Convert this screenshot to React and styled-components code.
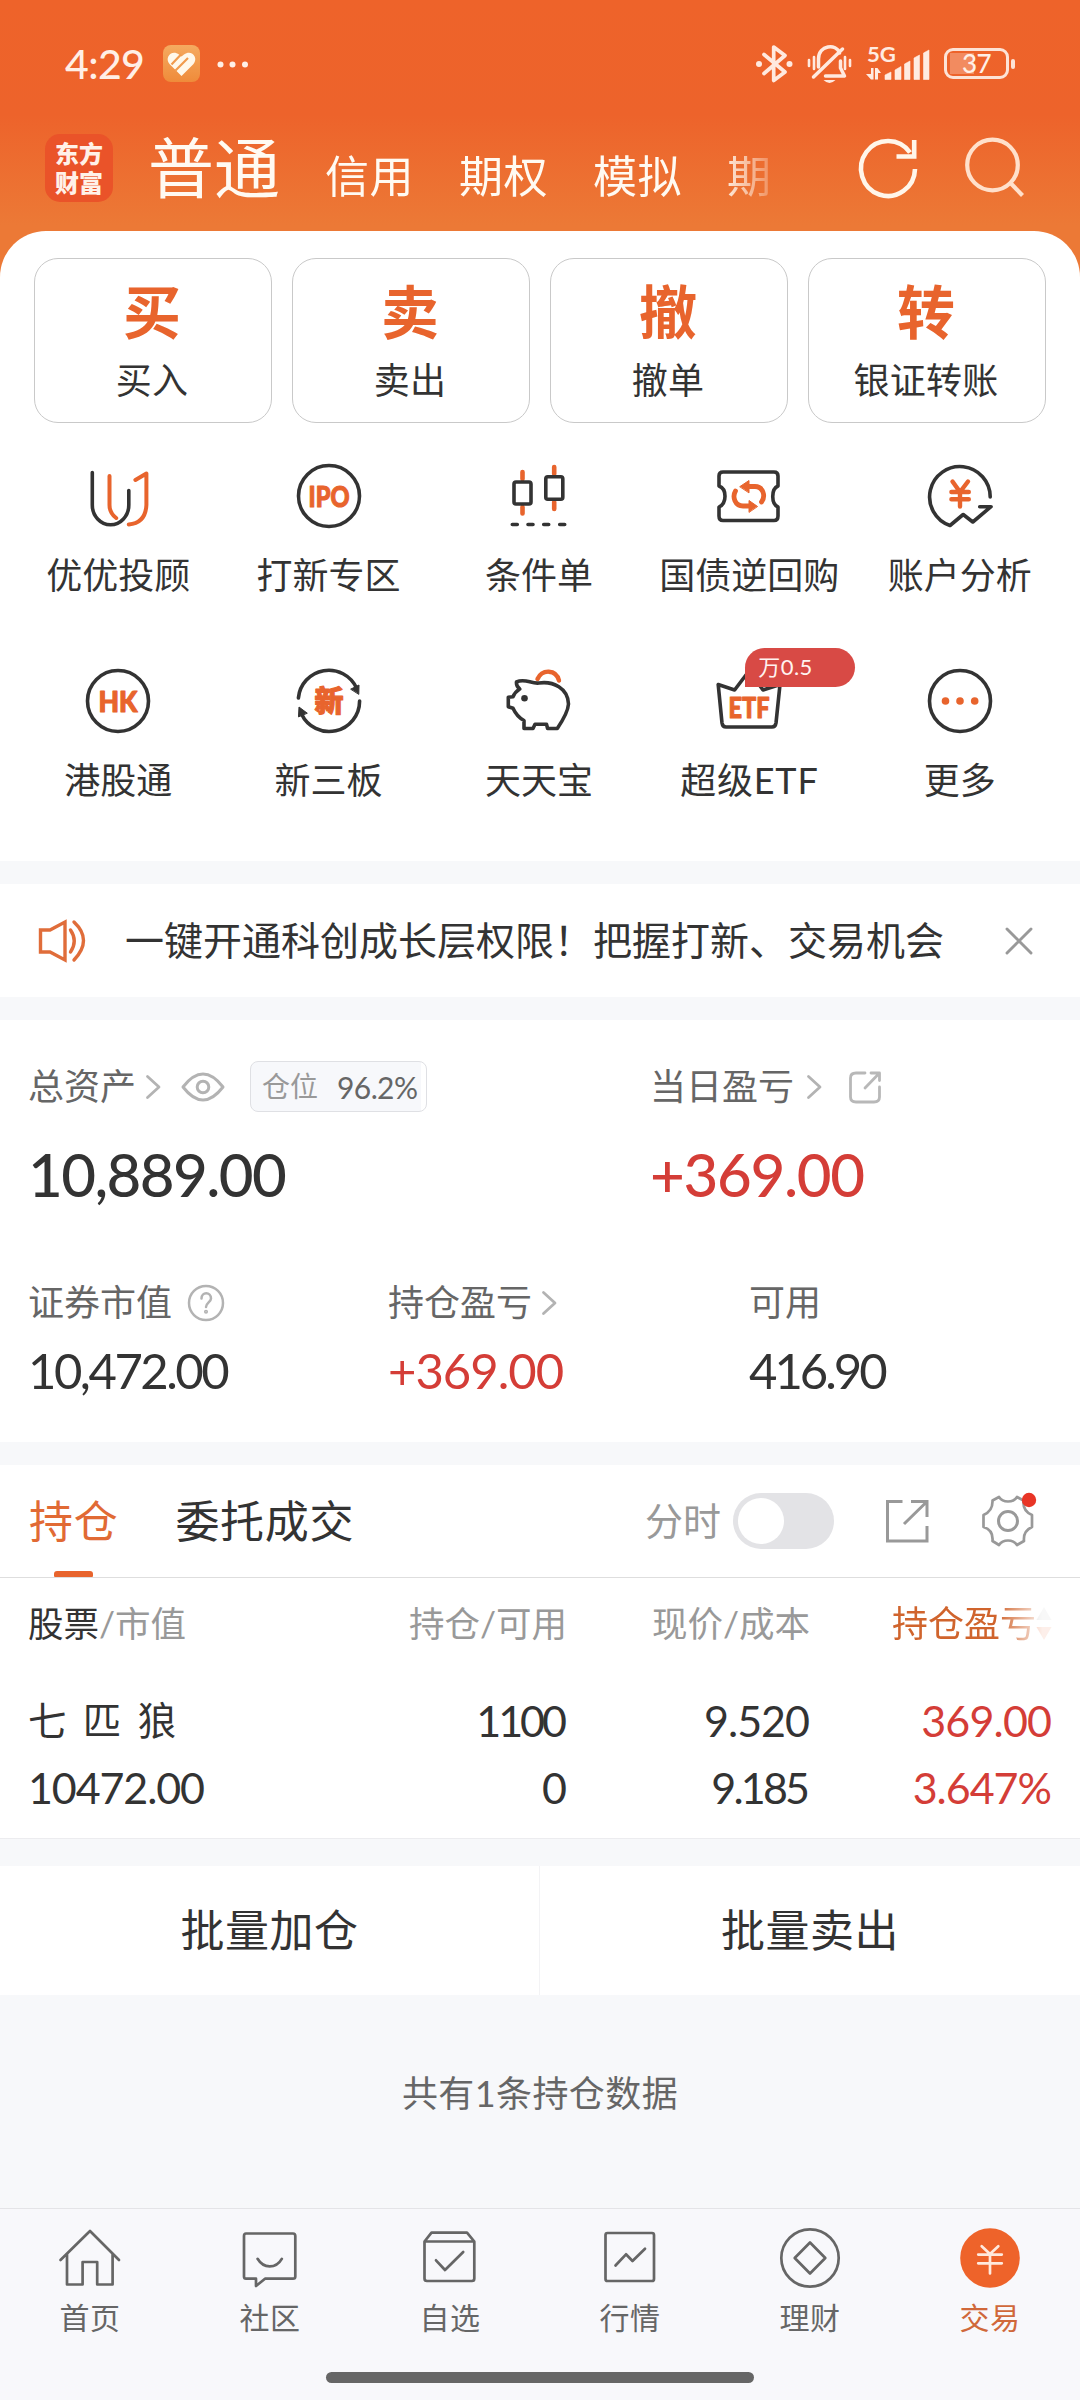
import React from "react";
import styled, { createGlobalStyle, css } from "styled-components";

const ORANGE = "#e8642d";
const INK = "#333333";
const RED = "#d43d37";
const BAND = "#f7f8fa";

const GlobalStyle = createGlobalStyle`
  *, *::before, *::after { box-sizing: border-box; }
  body {
    margin: 0;
    background: ${BAND};
    color: ${INK};
    font-family: Lato, "Noto Sans CJK SC", sans-serif;
  }
  svg { display: block; flex: none; overflow: visible; }
`;

const Screen = styled.div`
  width: 1080px;
  height: 2400px;
  display: flex;
  flex-direction: column;
  overflow: hidden;
  background: ${BAND};
`;

const Top = styled.div`
  background: linear-gradient(#ee632a 0, #ed632b 115px, #ec7936 225px);
`;

const Row = styled.div`
  display: flex;
  align-items: center;
  margin-left: ${(p) => (p.$push ? "auto" : `${p.$left || 0}px`)};
  gap: ${(p) => p.$gap || 0}px;
`;

const Text = styled.span`
  display: block;
  white-space: pre;
  line-height: 1.2;
  font-size: ${(p) => p.$size || 36}px;
  color: ${(p) => p.$color || "inherit"};
  font-weight: ${(p) => p.$weight || 400};
  letter-spacing: ${(p) => p.$track || 0}px;
  word-spacing: ${(p) => p.$word || 0}px;
`;

/* Numbers set tight; the last glyph's tracking is handed back so right edges align. */
const Num = styled(Text)`
  margin-right: ${(p) => -(p.$track || 0)}px;
`;

/* Status bar */
const StatusBar = styled(Row)`
  height: 127px;
  padding: 0 71px 0 65px;
  justify-content: space-between;
  color: #ffefe6;
`;
const Battery = styled.div`
  position: relative;
  width: 65px;
  height: 31px;
  border: 3px solid #fde3d6;
  border-radius: 9px;
  display: flex;
  align-items: center;
  justify-content: center;
  background: linear-gradient(90deg, #f28b60 24px, transparent 24px) no-repeat 3px 2px / 56px 21px;
  &::after {
    content: "";
    position: absolute;
    right: -9px;
    top: 8px;
    width: 4px;
    height: 10px;
    border-radius: 2px;
    background: #fde3d6;
  }
`;

/* Account navigation */
const AccountBar = styled(Row)`
  height: 104px;
  padding: 0 55px 23px 45px;
`;
const Logo = styled.div`
  width: 68px;
  height: 68px;
  margin-right: 35px;
  border-radius: 15px;
  background: #ea5329;
  color: #fff1e8;
  display: flex;
  flex-direction: column;
  align-items: center;
  justify-content: center;
  font-weight: 900;
  font-size: 24px;
  line-height: 29px;
`;
const AccountTabs = styled.div`
  display: flex;
  align-items: baseline;
  width: 645px;
  height: 80px;
  gap: 45px;
  color: #fffaf2;
  mask-image: linear-gradient(90deg, #000 570px, rgba(0, 0, 0, 0.25) 622px, transparent 626px);
`;

/* Main sheet */
const Sheet = styled.div`
  background: #fff;
  border-radius: 46px 46px 0 0;
  height: 630px;
  padding-top: 27px;
`;
const QuickRow = styled.div`
  display: grid;
  grid-template-columns: repeat(4, 238px);
  gap: 20px;
  padding: 0 34px;
`;
const QuickCard = styled.div`
  height: 165px;
  border: 1px solid #c9c9c9;
  border-radius: 24px;
  display: flex;
  flex-direction: column;
  align-items: center;
  gap: 12px;
  padding: 18px 2px 0 0;
`;
const ShortcutGrid = styled.div`
  display: grid;
  grid-template-columns: repeat(5, 210.4px);
  grid-auto-rows: 205px;
  padding: 40px 13px 0;
`;
const Shortcut = styled.div`
  position: relative;
  display: flex;
  flex-direction: column;
  align-items: center;
  gap: 25px;
`;
const Badge = styled.div`
  position: absolute;
  left: 101px;
  top: -20px;
  width: 110px;
  height: 39px;
  padding-left: 13px;
  display: flex;
  align-items: center;
  border-radius: 20px 20px 20px 0;
  background: #d84a45;
  color: #fff3f0;
`;

/* Sections */
const Gap = styled.div`
  height: ${(p) => p.$h}px;
  background: ${BAND};
`;
const Notice = styled(Row)`
  height: 113px;
  background: #fff;
  padding: 0 47px 0 37px;
`;
const Assets = styled.div`
  height: 422px;
  background: #fff;
  padding-top: 41px;
`;
const AssetLine = styled.div`
  display: grid;
  grid-template-columns: ${(p) => p.$cols};
  grid-template-rows: 100%;
  align-items: center;
  padding-left: 28px;
  margin-top: ${(p) => p.$mt || 0}px;
  height: ${(p) => p.$h}px;
`;
const Ratio = styled(Row)`
  width: 177px;
  height: 51px;
  margin-left: 25px;
  padding-left: 11px;
  gap: 19px;
  border: 1px solid #dfe0e4;
  border-radius: 8px;
  background: linear-gradient(90deg, #f7f8fb 170px, #fff 170px);
`;
const TabBar = styled(Row)`
  height: 113px;
  background: #fff;
  border-bottom: 1px solid #dedede;
  padding: 0 45px 0 29px;
`;
const HoldingTab = styled.div`
  height: 112px;
  margin-right: 57px;
  display: flex;
  align-items: center;
  position: relative;
  ${(p) =>
    p.$active &&
    css`
      color: #e16a34;
      &::after {
        content: "";
        position: absolute;
        left: 25px;
        bottom: 0;
        width: 39px;
        height: 6px;
        border-radius: 3px 3px 1px 1px;
        background: ${ORANGE};
      }
    `}
`;
const Toggle = styled.div`
  width: 101px;
  height: 56px;
  border-radius: 28px;
  background: #e3e3e6;
  padding: 5px;
  margin: 0 51px 0 12px;
  &::before {
    content: "";
    display: block;
    width: 46px;
    height: 46px;
    border-radius: 50%;
    background: #fff;
  }
`;
const Table = styled.div`
  height: 261px;
  background: #fff;
  border-bottom: 1px solid #ececef;
  padding: 11px 28px 0;
`;
const TableRow = styled.div`
  display: grid;
  grid-template-columns: 300px 239px 243px 1fr;
  grid-template-rows: 100%;
  align-items: center;
  margin-top: ${(p) => p.$mt || 0}px;
  height: ${(p) => p.$h}px;
  & > :not(:first-child) { justify-self: end; }
`;
const SortHead = styled(Row)`
  width: 160px;
  mask-image: linear-gradient(90deg, #000 105px, rgba(0, 0, 0, 0.1) 150px);
`;
const Actions = styled.div`
  display: grid;
  grid-template-columns: 539px 1px 540px;
  height: 129px;
  background: #fff;
`;
const Action = styled.div`
  display: flex;
  align-items: center;
  justify-content: center;
`;
const Divider = styled.div`
  background: #f3f3f5;
`;
const Footnote = styled.div`
  flex: 1;
  display: flex;
  justify-content: center;
  padding-top: 77px;
  color: #666;
`;
const BottomNav = styled.div`
  height: 192px;
  border-top: 1px solid #e4e4e7;
  background: #f8f8fb;
`;
const NavItems = styled.div`
  display: grid;
  grid-template-columns: repeat(6, 180px);
  height: 163px;
  padding-top: 17px;
`;
const NavItem = styled.div`
  display: flex;
  flex-direction: column;
  align-items: center;
  gap: 9px;
  color: ${(p) => (p.$active ? "#d0683a" : "#666")};
`;
const HomeBar = styled.div`
  width: 428px;
  height: 11px;
  border-radius: 6px;
  background: #666;
  margin: 0 auto;
`;

const Icon = ({ w = 66, h = w, sw = 3.6, color = INK, children }) => (
  <svg
    width={w}
    height={h}
    viewBox={`${-w / 2} ${-h / 2} ${w} ${h}`}
    fill="none"
    stroke={color}
    strokeWidth={sw}
    strokeLinecap="round"
    strokeLinejoin="round"
  >
    {children}
  </svg>
);

const Glyph = ({ y = 10.5, size = 29, len, children }) => (
  <text
    x="0"
    y={y}
    textAnchor="middle"
    fontSize={size}
    fontWeight="900"
    fill={ORANGE}
    stroke={ORANGE}
    strokeWidth="1.1"
    textLength={len}
    lengthAdjust="spacingAndGlyphs"
  >
    {children}
  </text>
);

const Chevron = () => (
  <Icon w={16} h={26} sw={2.8} color="#b3b3b3">
    <path d="M-5.5-10.5 6 0-5.5 10.5" />
  </Icon>
);

const shortcuts = [
  {
    label: "优优投顾",
    icon: (
      <>
        <path d="M-25.7-23.5V9a18.2 19.7 0 0 0 36.5 0V-5.5" />
        <path stroke={ORANGE} strokeWidth="4" d="M-8.5-20V9Q-8.5 17-1.8 22M17.4-16 28.4-22.5V9Q27.5 27 10.8 28.5" />
      </>
    ),
  },
  {
    label: "打新专区",
    icon: (
      <>
        <circle r="30.5" />
        <Glyph len={41}>IPO</Glyph>
      </>
    ),
  },
  {
    label: "条件单",
    icon: (
      <>
        <path stroke={ORANGE} strokeWidth="4.6" d="M-16.5-24v7M-16.5 11v6.5M15.2-29v7M15.2 6v7" />
        <rect x="-25" y="-14" width="17" height="22" rx="2" />
        <rect x="6.8" y="-19.3" width="17" height="22.6" rx="2" />
        <path d="M-26.7 28.5h5M-11 28.5h5M4.7 28.5h5M20.7 28.5h5" />
      </>
    ),
  },
  {
    label: "国债逆回购",
    icon: (
      <>
        <path d="M-26-24H25Q29-24 29-20V-10C22-7 22 8 29 11V20Q29 24.5 25 24.5H-26Q-30 24.5-30 20V11C-22 7-22-7-30-10V-20Q-30-24-26-24Z" />
        <g stroke={ORANGE} strokeWidth="4.8">
          <path d="M-3-9.5H6C14-9.5 17 0 12.5 6M3 10H-6C-14 10-17 1-13.5-5" />
          <path strokeWidth="1" fill={ORANGE} d="M-9-9.5 0-15.5V-3.5ZM8.3 10.3 0 4.5V16Z" />
        </g>
      </>
    ),
  },
  {
    label: "账户分析",
    icon: (
      <>
        <path d="M30.2 1A30.3 30.3 0 1 0-10 29.5L3.2 18.5 12.8 26 31 10.7H19.7" />
        <path stroke={ORANGE} strokeWidth="4.4" d="M-7.5-14.5 0-4 8-14.5M-8.6-4H8.8M-8.6 3.2H8.8M0-4V10.5" />
      </>
    ),
  },
  {
    label: "港股通",
    icon: (
      <>
        <circle r="30.5" />
        <Glyph len={39}>HK</Glyph>
      </>
    ),
  },
  {
    label: "新三板",
    icon: (
      <>
        <path d="M-30.6-3A30.5 30.5 0 0 1 27.5-13M30.6 0A30.5 30.5 0 0 1-27.5 13" />
        <path strokeWidth="1" fill={INK} d="M22-12 30-16 29.8-7ZM-22 12-30 6-30.5 15.5Z" />
        <Glyph size={29} y={10.5}>新</Glyph>
      </>
    ),
  },
  {
    label: "天天宝",
    icon: (
      <>
        <path stroke={ORANGE} strokeWidth="4.4" d="M-1.5-22C3-32 17-32 20-20.5" />
        <path d="M-22.5-19C-14-23-8-17 0-18 14-20 29-13 29.5 3 29 11 24 19 18.3 27.5H8.6L7.5 23.3H-4L-6 27.5H-15V19.5Q-22 16-26 7.3L-30.7 5.7V-3.7L-26-4.3Q-24-9-19.3-12-23-15-22.5-19Z" />
        <circle cx="-14.5" cy="-2.7" r="3.3" fill={INK} stroke="none" />
      </>
    ),
  },
  {
    label: "超级ETF",
    badge: "万0.5",
    track: 0.8,
    icon: (
      <>
        <path d="M-30.8-16.5-27 22Q-26.4 26-23 26H23Q26.4 26 27 22L31-16.5 14-11 0-30-14.4-11Z" />
        <Glyph len={41} y={16.5}>ETF</Glyph>
      </>
    ),
  },
  {
    label: "更多",
    icon: (
      <>
        <circle r="30.5" />
        <g fill={ORANGE} stroke="none">
          <circle cx="-14.5" r="3.8" />
          <circle r="3.8" />
          <circle cx="14.7" r="3.8" />
        </g>
      </>
    ),
  },
];

const navItems = [
  {
    label: "首页",
    icon: <path d="M-29.5 2 0-27 29 2M-23-4V26.5H-7.4V4H7.2V26.5H22.6V-4" />,
  },
  {
    label: "社区",
    icon: <path d="M-24-24.5H23Q25.3-24.5 25.3-22V18.5Q25.3 20.7 23 20.7H-5L-14 28V20.7H-24Q-26 20.7-26 18.5V-22Q-26-24.5-24-24.5ZM-12.4.8Q-8 8.3-.3 8.3 7.5 8.3 11.8.8" />,
  },
  {
    label: "自选",
    icon: <path d="M-25.5-16.5V20.5Q-25.5 23-23 23H22Q24.3 23 24.3 20.5V-16.5ZM-25.5-16.5-18.5-25.3H17L24.3-16.5M-14 2.3-5 12 13.2-6" />,
  },
  {
    label: "行情",
    icon: <path d="M-22.5-25H22Q24-25 24-23V21Q24 23 22 23H-22.5Q-24.5 23-24.5 21V-23Q-24.5-25-22.5-25ZM-14.5 7.5-4-3.7 2.5 3 15-9.3" />,
  },
  {
    label: "理财",
    icon: (
      <>
        <circle r="28.7" />
        <path d="M0-15.5 15.3 0 0 15.5-15.3 0Z" />
      </>
    ),
  },
  {
    label: "交易",
    active: true,
    icon: (
      <>
        <circle r="29.8" fill="#ee632a" stroke="none" />
        <path stroke="#ffe9dd" d="M-8.3-11.8 0-4 8.3-11.8M-11.8-3.4H11.8M-11.8 5.3H11.8M0-3.4V15.5" />
      </>
    ),
  },
];

export default function App() {
  return (
    <Screen lang="zh-CN">
      <GlobalStyle />
      <Top>
        <StatusBar>
          <Row $gap={19}>
            <Text $size={41} $weight={500} $track={-0.6}>4:29</Text>
            <svg width="37" height="37" viewBox="0 0 37 37">
              <defs>
                <linearGradient id="heartApp" x1="0" y1="0" x2="0" y2="1">
                  <stop stopColor="#f5aa60" />
                  <stop offset="1" stopColor="#ef8b3a" />
                </linearGradient>
              </defs>
              <rect width="37" height="37" rx="8" fill="url(#heartApp)" />
              <path d="M18.500 31 6.500 19C1 12 9 4 16 9.500L18.500 11.500 21 9.500C28 4 36 12 30.500 19Z" fill="#fff8ea" />
              <path d="M8.500 19.500 18 9.500M12.500 25.500 25 13" stroke="#f19b4d" strokeWidth="2.200" />
            </svg>
            <svg width="36" height="10" viewBox="0 0 36 10" fill="#ffefe6">
              <circle cx="1.500" cy="5.500" r="3" />
              <circle cx="13.500" cy="5.500" r="3" />
              <circle cx="26" cy="5.500" r="3" />
            </svg>
          </Row>
          <Row $gap={14}>
            <Icon w={38} h={40} sw={3.7} color="#ffe9df">
              <path d="M-10-9.500 11 8-.300 16.500V-17L11-8.500-10 9.500" />
              <circle cx="-15" r="3" fill="#ffe9df" stroke="none" />
              <circle cx="15.500" r="3" fill="#ffe9df" stroke="none" />
            </Icon>
            <Icon w={45} h={40} sw={3.5} color="#ffe9df">
              <path d="M-11 3V-5C-11-19 7-21 10-11M11-3V4L15 12H-4M-16 13 13-15" />
              <path strokeWidth="2.600" d="M-20.500-4V2M-15.500-7V5M15.500-7V5M20.500-4V2" />
              <path fill="#ffe9df" stroke="none" d="M-6 16H6Q0 22-6 16Z" />
            </Icon>
            <svg width="64" height="40" viewBox="0 0 64 40" fill="#ffebe1">
              <text x="1" y="18" fontSize="21" fontWeight="700" textLength="29" lengthAdjust="spacingAndGlyphs">5G</text>
              <path d="M5 24h2.500v11.500H5L0 30h5ZM9 24h2.500L15 29h-3v6.500H9Z" />
              <path d="M19 31l6-3v7.500h-6ZM29 26l6-3.500v13h-6ZM38.500 20l5.500-3v18.500h-5.500ZM48 14l5.500-3v24.500H48ZM57.500 9l5.500-3v29.500h-5.500Z" stroke="#ffebe1" strokeWidth=".6" strokeLinejoin="round" />
            </svg>
            <Battery>
              <Text $size={26} $weight={500} $track={-0.5}>37</Text>
            </Battery>
          </Row>
        </StatusBar>
        <AccountBar>
          <Logo>
            <span>东方</span>
            <span>财富</span>
          </Logo>
          <AccountTabs>
            <Text $size={66}>普通</Text>
            <Text $size={44} $track={0.5}>信用</Text>
            <Text $size={44} $track={0.5}>期权</Text>
            <Text $size={44} $track={0.5}>模拟</Text>
            <Text $size={44}>期</Text>
          </AccountTabs>
          <Row $push $gap={47}>
            <Icon w={60} sw={4.6} color="#fff6ea">
              <path strokeLinecap="butt" strokeLinejoin="miter" d="M27 1A27 27.500 0 1 1 22-15.500M26.200-28V-11.500H8.500" />
            </Icon>
            <Icon w={60} sw={4.2} color="#ffe0cb">
              <circle cx="-2.500" cy="-3" r="25.300" />
              <path strokeLinecap="butt" d="M15 14.500 27.500 27.500" />
            </Icon>
          </Row>
        </AccountBar>
        <Sheet>
          <QuickRow>
            {[
              ["买", "买入"],
              ["卖", "卖出"],
              ["撤", "撤单"],
              ["转", "银证转账"],
            ].map(([mark, label]) => (
              <QuickCard key={mark}>
                <Text $size={58} $weight={700} $color={ORANGE}>{mark}</Text>
                <Text $track={0.3}>{label}</Text>
              </QuickCard>
            ))}
          </QuickRow>
          <ShortcutGrid>
            {shortcuts.map((s) => (
              <Shortcut key={s.label}>
                <Icon>{s.icon}</Icon>
                <Text $track={s.track}>{s.label}</Text>
                {s.badge && (
                  <Badge>
                    <Text $size={22} $track={0.5}>{s.badge}</Text>
                  </Badge>
                )}
              </Shortcut>
            ))}
          </ShortcutGrid>
        </Sheet>
      </Top>
      <Gap $h={23} />
      <Notice>
        <Icon w={50} h={44} sw={3.4} color="#e06d3a">
          <path strokeLinejoin="miter" d="M-21.500-11H-12L3-19V19L-12 11H-21.500ZM8.500-11Q16 0 8.500 11M12-19Q31-1 12 19" />
        </Icon>
        <Row $left={38}>
          <Text $size={39}>一键开通科创成长层权限！把握打新、交易机会</Text>
        </Row>
        <Row $push>
          <Icon w={28} sw={2.9} color="#999">
            <path d="M-12-12 12 12M12-12-12 12" />
          </Icon>
        </Row>
      </Notice>
      <Gap $h={23} />
      <Assets>
        <AssetLine $h={51} $cols="622px 1fr">
          <Row>
            <Text $color="#666">总资产</Text>
            <Row $left={9} $gap={20}>
              <Chevron />
              <Icon w={44} h={30} sw={3} color="#b3b3b3">
                <path d="M-20 0Q0-26 20 0 0 26-20 0Z" />
                <circle r="5.800" />
              </Icon>
            </Row>
            <Ratio>
              <Text $size={28} $color="#999">仓位</Text>
              <Text $size={30} $color="#666" $track={-0.6}>96.2%</Text>
            </Ratio>
          </Row>
          <Row>
            <Text $color="#666">当日盈亏</Text>
            <Row $left={12} $gap={26}>
              <Chevron />
              <Icon w={34} sw={2.8} color="#b8b8b8">
                <path d="M0-14H-9Q-14.500-14-14.500-9V10Q-14.500 15-9 15H9Q14.500 15 14.500 10V0M6-14H14.500V-6.500M14-13.500 0 1" />
              </Icon>
            </Row>
          </Row>
        </AssetLine>
        <AssetLine $h={123} $cols="622px 1fr">
          <Num $size={60} $weight={500} $track={-1.6}>10,889.00</Num>
          <Num $size={60} $weight={500} $track={-1.3} $color={RED}>+369.00</Num>
        </AssetLine>
        <AssetLine $mt={35} $h={66} $cols="360px 361px 1fr">
          <Row>
            <Text $color="#666">证券市值</Text>
            <Row $left={15}>
              <Icon w={38} sw={2.5} color="#b3b3b3">
                <circle r="17" />
                <path d="M-4.500-4.500C-4.500-11.500 5-11.500 5-4.500 5-1 0 0 0 4" />
                <circle cy="8.800" r=".8" />
              </Icon>
            </Row>
          </Row>
          <Row>
            <Text $color="#666">持仓盈亏</Text>
            <Row $left={9}>
              <Chevron />
            </Row>
          </Row>
          <Text $color="#666">可用</Text>
        </AssetLine>
        <AssetLine $h={68} $cols="360px 361px 1fr">
          <Num $size={49} $track={-2.5}>10,472.00</Num>
          <Num $size={49} $track={-1} $color={RED}>+369.00</Num>
          <Num $size={49} $track={-3}>416.90</Num>
        </AssetLine>
      </Assets>
      <Gap $h={23} />
      <TabBar>
        <HoldingTab $active>
          <Text $size={44} $track={0.7}>持仓</Text>
        </HoldingTab>
        <HoldingTab>
          <Text $size={44} $track={0.7}>委托成交</Text>
        </HoldingTab>
        <Row $push>
          <Text $size={38} $color="#999">分时</Text>
          <Toggle />
          <Icon w={44} sw={3} color="#999">
            <path strokeLinecap="butt" strokeLinejoin="miter" d="M-4.500-19.500H-19.500V20H20V5M4-19.500H20V-4M19.500-19-3 3" />
          </Icon>
          <Row $left={52}>
            <Icon w={54} sw={2.7} color="#999">
              <circle r="9.500" strokeWidth="3" />
              <path d="M-9-24Q-6-19.500 0-19.500T9-24L15.500-20.500Q14.500-10 24-6V6Q15 10 16 20L9 24Q6 19.500 0 19.500T-9 24L-15.500 20Q-14.500 9-24.500 6V-6Q-15-10-15.500-20.500Z" />
              <circle cx="21" cy="-21" r="7.200" fill="#e83526" stroke="none" />
            </Icon>
          </Row>
        </Row>
      </TabBar>
      <Table>
        <TableRow $h={70}>
          <Row>
            <Text $size={35.5}>股票</Text>
            <Text $size={35.5} $color="#999">/市值</Text>
          </Row>
          <Text $size={35.5} $color="#999">持仓/可用</Text>
          <Text $size={35.5} $color="#999">现价/成本</Text>
          <SortHead>
            <Text $color="#d0642d">持仓盈亏</Text>
            <svg width="16" height="34" viewBox="0 0 16 34">
              <path d="M8 0 15.500 13H.500Z" fill="#bbb" />
              <path d="M8 33 15.500 20H.500Z" fill={ORANGE} />
            </svg>
          </SortHead>
        </TableRow>
        <TableRow $mt={28} $h={67}>
          <Text $size={38.5} $word={6.5}>七 匹 狼</Text>
          <Num $size={43} $track={-3}>1100</Num>
          <Num $size={43} $track={-1}>9.520</Num>
          <Num $size={43} $track={-0.8} $color={RED}>369.00</Num>
        </TableRow>
        <TableRow $h={67}>
          <Num $size={43} $track={-1.1}>10472.00</Num>
          <Num $size={43}>0</Num>
          <Num $size={43} $track={-2.8}>9.185</Num>
          <Num $size={43} $track={-1} $color={RED}>3.647%</Num>
        </TableRow>
      </Table>
      <Gap $h={27} />
      <Actions>
        <Action>
          <Text $size={44} $track={0.5}>批量加仓</Text>
        </Action>
        <Divider />
        <Action>
          <Text $size={44} $track={0.5}>批量卖出</Text>
        </Action>
      </Actions>
      <Footnote>
        <Text $track={0.4}>共有1条持仓数据</Text>
      </Footnote>
      <BottomNav>
        <NavItems>
          {navItems.map((n) => (
            <NavItem key={n.label} $active={n.active}>
              <Icon w={64} sw={2.7} color="#666">{n.icon}</Icon>
              <Text $size={30} $track={0.5}>{n.label}</Text>
            </NavItem>
          ))}
        </NavItems>
        <HomeBar />
      </BottomNav>
    </Screen>
  );
}
